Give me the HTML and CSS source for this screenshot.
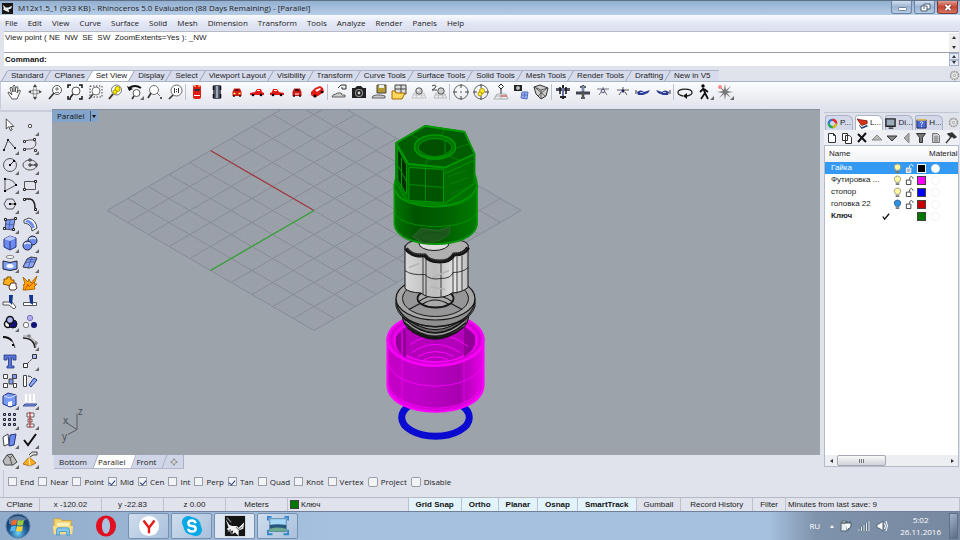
FILE: index.html
```html
<!DOCTYPE html>
<html lang="en">
<head>
<meta charset="utf-8">
<title>M12x1.5_1 - Rhinoceros 5.0 Evaluation</title>
<link rel="stylesheet" href="styles.css">
</head>
<body>
<header class="titlebar">
  <svg class="app-icon" viewBox="0 0 12 12"><rect width="12" height="12" fill="#151515"/><path d="M1 2l3 3 3 0 4-2-1 3-3 1 1 3-3-1-4-2 1-1z" fill="#eee"/></svg>
  <h1>M12x1.5_1 (933 KB) - Rhinoceros 5.0 Evaluation (88 Days Remaining) - [Parallel]</h1>
  <div class="window-buttons">
    <button aria-label="Minimize"><svg viewBox="0 0 20 11"><rect x="6.500" y="5.500" width="8" height="3" rx="1" fill="#fff" stroke="#5b6b80" stroke-width=".8"/></svg></button>
    <button aria-label="Restore"><svg viewBox="0 0 20 11"><path d="M9 2h6v5h-3v2H6V4h3z" fill="#fff" stroke="#4c5c70"/><path d="M9 4h3v3M8 6h2" fill="none" stroke="#4c5c70"/></svg></button>
    <button class="close" aria-label="Close"><svg viewBox="0 0 20 11"><path d="M7.500 3l5 5m0-5l-5 5" stroke="#6b2a25" stroke-width="3.400"/><path d="M7.500 3l5 5m0-5l-5 5" stroke="#fff" stroke-width="2"/></svg></button>
  </div>
</header>
<nav class="menubar">
  <button>File</button><button>Edit</button><button>View</button><button>Curve</button><button>Surface</button><button>Solid</button><button>Mesh</button><button>Dimension</button><button>Transform</button><button>Tools</button><button>Analyze</button><button>Render</button><button>Panels</button><button>Help</button>
</nav>
<section class="command">
  <div class="history"><p>View point ( NE&nbsp; NW&nbsp; SE&nbsp; SW&nbsp; ZoomExtents=Yes ): _NW</p>
    <div class="steppers"><button aria-label="Scroll up"><i class="up"></i></button><button aria-label="Scroll down"><i class="down"></i></button></div></div>
  <div class="prompt"><label for="cmd">Command:</label><input id="cmd" type="text">
    <div class="steppers boxed"><button aria-label="Previous"><i class="up"></i></button><button aria-label="Next"><i class="down"></i></button></div></div>
</section>
<nav class="tool-tabs">
  <button>Standard</button><button>CPlanes</button><button class="active">Set View</button><button>Display</button><button>Select</button><button>Viewport Layout</button><button>Visibility</button><button>Transform</button><button>Curve Tools</button><button>Surface Tools</button><button>Solid Tools</button><button>Mesh Tools</button><button>Render Tools</button><button>Drafting</button><button>New in V5</button>
  <button class="gear" aria-label="Options"><svg viewBox="0 0 12 12"><circle cx="6" cy="6" r="4.500" fill="none" stroke="#999" stroke-width="1.500" stroke-dasharray="2 .8"/><circle cx="6" cy="6" r="3.600" fill="#eee" stroke="#aaa" stroke-width=".7"/><circle cx="6" cy="6" r="1.300" fill="none" stroke="#999"/></svg></button>
</nav>
<div class="toolbar">
  <button aria-label="Pan"><svg viewBox="0 0 16 16"><path d="M5 15L1 9q0-2 2 0l2 2-2-7q1-2 2 0l1 4V2q1-2 2 0v6l1-5q2-1 2 1l-1 5 2-3q2 0 1 2l-3 7z" fill="#fff" stroke="#333" stroke-width=".8"/></svg></button>
  <button aria-label="Rotate view"><svg viewBox="0 0 16 16"><path d="M2 8q6-4 12 0-6 4-12 0M8 1q-4 7 0 14 4-7 0-14" fill="none" stroke="#777" stroke-width=".8"/><path d="M1 8l3-2v3zM15 8l-3-2v3zM8 0l2 3H6zM8 16l2-3H6z" fill="#444"/></svg></button>
  <button aria-label="Zoom dynamic"><svg viewBox="0 0 16 16"><circle cx="10" cy="6" r="4.500" fill="#fff" stroke="#444" stroke-width=".9"/><path d="M8 5h4M10 3v4M8 8.500h4" stroke="#555" stroke-width=".8"/><path d="M7 9l-5 6" stroke="#333" stroke-width="1.600"/></svg></button>
  <button aria-label="Zoom extents"><svg viewBox="0 0 16 16"><circle cx="9" cy="7" r="4" fill="#fff" stroke="#444" stroke-width=".9"/><path d="M6 10l-3 4" stroke="#222" stroke-width="1.600"/><path d="M1 4V1h3M12 1h3v3M15 12v3h-3M1 12v3h3" fill="none" stroke="#111" stroke-width="1.500"/></svg></button>
  <button aria-label="Zoom window"><svg viewBox="0 0 16 16"><path d="M3 2h12v11H3z" fill="none" stroke="#444" stroke-dasharray="1.500 1.500"/><circle cx="9" cy="7" r="4" fill="#fff" stroke="#666" stroke-width=".9"/><path d="M6 10l-4 5" stroke="#444" stroke-width="1.600"/></svg></button>
  <button aria-label="Zoom selected"><svg viewBox="0 0 16 16"><circle cx="9.500" cy="6" r="5" fill="#fff" stroke="#777"/><circle cx="10.500" cy="5" r="2.500" fill="#fe0" stroke="#a90"/><circle cx="8" cy="8" r="2" fill="#fe0" stroke="#a90"/><path d="M6 10l-4 5" stroke="#432" stroke-width="2"/></svg></button>
  <button class="more" aria-label="Undo view"><svg viewBox="0 0 16 16"><circle cx="9.500" cy="9" r="3.500" fill="#fff" stroke="#555"/><path d="M2 4q6-4 12 0" fill="none" stroke="#111" stroke-width="2"/><path d="M0 2l2 5 4-2z" fill="#111"/><path d="M7 12l-2 3" stroke="#333" stroke-width="1.600"/></svg></button>
  <button aria-label="Zoom target"><svg viewBox="0 0 16 16"><circle cx="7" cy="6" r="4.500" fill="#fff" stroke="#666" stroke-width=".9"/><path d="M4 9l-3 5" stroke="#333" stroke-width="1.600"/><path d="M10 9l3 3" stroke="#777"/><path d="M13 13h2v2h-2z" fill="#555"/></svg></button>
  <button aria-label="Zoom 1 to 1"><svg viewBox="0 0 16 16"><circle cx="9.500" cy="6.500" r="5.500" fill="#fff" stroke="#555" stroke-width=".9"/><path d="M7.500 4v5M11.500 4v5M9.500 5v1M9.500 7v1" stroke="#333"/><path d="M6 11l-4 4" stroke="#333" stroke-width="1.600"/></svg></button>
  <hr>
  <button aria-label="Top"><svg viewBox="0 0 16 16"><rect x="4" y="1" width="8" height="14" rx="2" fill="#e21a14"/><path d="M5 5h6l-1 2H6z" fill="#234"/><path d="M5 11h6v1H5z" fill="#fff"/><path d="M5 2h2M9 2h2" stroke="#ff9"/></svg></button>
  <button aria-label="Bottom"><svg viewBox="0 0 16 16"><rect x="4" y="1" width="8" height="14" rx="1" fill="#556"/><path d="M8 2v12" stroke="#9ab" stroke-width="2"/><path d="M4.500 2v4M11.500 2v4M4.500 10v4M11.500 10v4" stroke="#111" stroke-width="1.600"/></svg></button>
  <button aria-label="Front"><svg viewBox="0 0 16 16"><path d="M3.500 8L5 4.500h6L12.500 8v4h-9z" fill="#d81812"/><path d="M5.500 7l1-2h3l1 2z" fill="#611"/><path d="M4.500 9.500h2M9.500 9.500h2" stroke="#ff6" stroke-width="1.500"/><path d="M4 12h2M10 12h2" stroke="#111" stroke-width="1.500"/></svg></button>
  <button aria-label="Left"><svg viewBox="0 0 16 16"><path d="M1 9l5-1 2-3h4l1 3 2 1v2H1z" fill="#e21a14"/><path d="M8 6.500h3" stroke="#fff"/><circle cx="4" cy="11" r="1.300"/><circle cx="12" cy="11" r="1.300"/></svg></button>
  <button aria-label="Right"><svg viewBox="0 0 16 16"><path d="M15 9l-5-1-2-3H4L3 8 1 9v2h14z" fill="#e21a14"/><path d="M5 6.500h3" stroke="#fff"/><circle cx="4" cy="11" r="1.300"/><circle cx="12" cy="11" r="1.300"/></svg></button>
  <button aria-label="Back"><svg viewBox="0 0 16 16"><path d="M3.500 8L5 4.500h6L12.500 8v4h-9z" fill="#c91914"/><path d="M5.500 7l1-2h3l1 2z" fill="#311"/><path d="M6 10h4" stroke="#fff"/><path d="M4 12h2M10 12h2" stroke="#111" stroke-width="1.500"/></svg></button>
  <button aria-label="Perspective"><svg viewBox="0 0 16 16"><path d="M2 8l4-4 5-2 3 2 1 4-6 4-4 1-3-2z" fill="#e21a14"/><path d="M6 6l5-2 1 1-4 3z" fill="#fff"/><circle cx="6" cy="12" r="1.600"/><circle cx="13" cy="8" r="1.300"/></svg></button>
  <hr>
  <button aria-label="Named views"><svg viewBox="0 0 16 16"><path d="M1 13l1-2 3-1 1-1h4l1 2h3v2z" fill="#ccc" stroke="#444" stroke-width=".8"/><path d="M7 4l3-3h5v4h-4V3" fill="#eee" stroke="#333"/></svg></button>
  <button aria-label="Save view"><svg viewBox="0 0 16 16"><path d="M1 4h3l2-2h4l2 2h3v10H1z" fill="#222"/><circle cx="8" cy="9" r="4" fill="#999"/><circle cx="8" cy="9" r="3" fill="#222"/><circle cx="8" cy="9" r="1.400" fill="#ddd"/></svg></button>
  <button aria-label="Save position"><svg viewBox="0 0 16 16"><path d="M6 1h9v8H6z" fill="#b6992e" stroke="#444"/><path d="M8 1h5v3H8z" fill="#eee"/><path d="M1 14l1-2 3-1h5l4 1v2z" fill="#ccc" stroke="#444" stroke-width=".8"/></svg></button>
  <button aria-label="Open views"><svg viewBox="0 0 16 16"><path d="M4 1h11v9H4zM4 5h11M10 1v9" fill="#ddd" stroke="#444"/><path d="M1 15V7h3l1 2h9l-3 6z" fill="#ffd75c" stroke="#a76a00"/></svg></button>
  <button aria-label="Shaded"><svg viewBox="0 0 16 16"><path d="M3 9h10l2 5H1zM2 11h12M6 9l-1 5M10 9l1 5" fill="none" stroke="#c4c4c8"/><circle cx="8" cy="7" r="3.200" fill="#ccc" stroke="#555"/><circle cx="7" cy="6" r="1" fill="#fff"/></svg></button>
  <button aria-label="Two point perspective"><svg viewBox="0 0 16 16"><path d="M5 9h8l3 5H3zM4 11h11M8 9l-1 5M11 9l1 5" fill="none" stroke="#bbb"/><circle cx="10" cy="7" r="3.200" fill="#ccc" stroke="#555"/><path d="M1 2q2-2 4 0 0 2-4 4h5" fill="none" stroke="#444"/></svg></button>
  <hr>
  <button aria-label="Camera target"><svg viewBox="0 0 16 16"><circle cx="8" cy="8" r="7" fill="none" stroke="#555" stroke-width=".9"/><path d="M8 0v4M8 12v4M0 8h4M12 8h4" stroke="#444"/><circle cx="8" cy="8" r="1" fill="#888"/></svg></button>
  <button aria-label="Target selected"><svg viewBox="0 0 16 16"><circle cx="8" cy="8" r="7" fill="none" stroke="#555" stroke-width=".9"/><path d="M8 0v4M8 12v4M0 8h4M12 8h4" stroke="#444"/><circle cx="9" cy="7" r="2.500" fill="#fe3" stroke="#b99500"/><circle cx="7" cy="10" r="2" fill="#fe3" stroke="#b99500"/></svg></button>
  <button aria-label="Set CPlane view"><svg viewBox="0 0 16 16"><path d="M8 10V4" stroke="#222"/><path d="M8 0l2.500 2.500L8 5 5.500 2.500z" fill="#fff" stroke="#222"/><path d="M4 10h9l2 5H1zM8 10v5M3 12h11" fill="none" stroke="#aaa"/><path d="M8 12h6" stroke="#d44"/></svg></button>
  <button aria-label="Camera to plane"><svg viewBox="0 0 16 16"><path d="M1 1h8v6H1z" fill="#222"/><circle cx="5" cy="4" r="2" fill="#bbb"/><path d="M9 8h6l-1 7-6-1zM12 8l-1 6M9 11h6" fill="#9cb4f4" stroke="#5870c0"/></svg></button>
  <button aria-label="Named cube"><svg viewBox="0 0 16 16"><path d="M1 3l6-2 8 3-2 8-5 3-5-5z" fill="#ccc" stroke="#333"/><path d="M1 3l7 3 7-2M8 6v9M3 4l9 8M14 4l-9 8" fill="none" stroke="#444" stroke-width=".8"/></svg></button>
  <hr>
  <button aria-label="Plane top"><svg viewBox="0 0 16 16"><path d="M1 4h14v3H1z" fill="#556"/><path d="M8 1v14M5 13h6" stroke="#222" stroke-width="2"/><path d="M8 4v8" stroke="#7b8fd0" stroke-width="1.500"/><path d="M5 3v7M11 3v7" stroke="#111" stroke-width="1.500"/></svg></button>
  <button aria-label="Plane bottom"><svg viewBox="0 0 16 16"><path d="M1 9h14" stroke="#445" stroke-width="3"/><path d="M5 3h6M6 14h4" stroke="#333" stroke-width="1.500"/><path d="M8 1v13" stroke="#555" stroke-width="2.500"/><path d="M8 2v5" stroke="#8a9cdc" stroke-width="1.500"/></svg></button>
  <button aria-label="Plane front"><svg viewBox="0 0 16 16"><path d="M2 5h12M8 3v5M6 8l-2 3M10 8l2 3" stroke="#555" stroke-width=".8"/><circle cx="8" cy="7" r="1.800" fill="#dde" stroke="#336" stroke-width=".8"/></svg></button>
  <button aria-label="Plane back"><svg viewBox="0 0 16 16"><path d="M2 6h12M8 3v5M6 8l-2 3M10 8l2 3" stroke="#333" stroke-width=".8"/><circle cx="8" cy="7" r="1.600" fill="#226"/></svg></button>
  <button aria-label="Plane left"><svg viewBox="0 0 16 16"><path d="M2 8q4-3 7 0l6-2-2 3-5 2H3z" fill="#2b3b91"/><path d="M5 8.500h3" stroke="#b8c4f0"/><path d="M1 6v4" stroke="#333"/></svg></button>
  <button aria-label="Plane right"><svg viewBox="0 0 16 16"><path d="M14 8q-4-3-7 0L1 6l2 3 5 2h5z" fill="#2b3b91"/><path d="M8 8.500h3" stroke="#b8c4f0"/><path d="M15 6v4" stroke="#333"/></svg></button>
  <hr>
  <button aria-label="Turntable"><svg viewBox="0 0 16 16"><path d="M6 12Q1 11 1 8.500C1 4 15 4 15 8.500Q15 11 10 12" fill="none" stroke="#222" stroke-width="1.300"/><path d="M10 9v6l-4-3z" fill="#111"/></svg></button>
  <button class="more" aria-label="Walkabout"><svg viewBox="0 0 16 16"><circle cx="6" cy="2" r="1.700"/><path d="M6 4l2 5-4 6M8 9l3 6M7 5l4 3M6 5L3 8" fill="none" stroke="#111" stroke-width="1.800"/></svg></button>
  <button class="more" aria-label="Compass"><svg viewBox="0 0 16 16"><path d="M8 0l1 6 5-4-4 5 6 1-6 1 4 5-5-4-1 6-1-6-5 4 4-5-6-1 6-1-4-5 5 4z" fill="#777"/><circle cx="3" cy="3" r="2" fill="#f88"/></svg></button>
</div>
<main class="workspace">
  <aside class="toolbox">
    <button aria-label="Select"><svg viewBox="0 0 16 16"><path d="M5 1v12l3-3 2 5 2-1-2-4h4z" transform="scale(.85)" fill="#fff" stroke="#333"/></svg></button>
    <button class="more" aria-label="Point"><svg viewBox="0 0 16 16"><circle cx="8" cy="8" r="1.700" fill="#fff" stroke="#444"/></svg></button>
    <button class="more" aria-label="Polyline"><svg viewBox="0 0 16 16"><path d="M2 13L6 3l7 8" fill="none" stroke="#444"/><path d="M1 12h2v2H1zM5 2h2v2H5zM12 10h2v2h-2z" fill="#222"/></svg></button>
    <button class="more" aria-label="Curve"><svg viewBox="0 0 16 16"><path d="M3 4q10-3 11 2 0 7-11 6" fill="none" stroke="#555"/><path d="M1.500 3.500h2v2h-2zM11.500 1.500h2v2h-2zM1.500 11.500h2v2h-2zM12.500 12.500h2v2h-2z" fill="#fff" stroke="#333"/></svg></button>
    <button class="more" aria-label="Circle"><svg viewBox="0 0 16 16"><circle cx="8" cy="8" r="6.500" fill="none" stroke="#555"/><path d="M8 8l4-4" stroke="#222"/><path d="M7 7h2v2H7zM11 3h2v2h-2z"/></svg></button>
    <button class="more" aria-label="Ellipse"><svg viewBox="0 0 16 16"><ellipse cx="8" cy="8" rx="7" ry="5" fill="none" stroke="#555"/><path d="M8 8h6" stroke="#333"/><path d="M7 7h2v2H7zM7 2h2v2H7zM13 7h2v2h-2z" fill="#fff" stroke="#222"/></svg></button>
    <button class="more" aria-label="Arc"><svg viewBox="0 0 16 16"><path d="M3 14V2q8 0 11 6L3 14" fill="none" stroke="#444" stroke-width=".9"/><path d="M2 1h2v2H2zM2 13h2v2H2zM13 7h2v2h-2z"/></svg></button>
    <button class="more" aria-label="Rectangle"><svg viewBox="0 0 16 16"><path d="M2.500 4.500h11v8h-11z" fill="none" stroke="#555"/><path d="M1.500 11.500h2v2h-2zM12.500 3.500h2v2h-2z" fill="#fff" stroke="#222"/></svg></button>
    <button class="more" aria-label="Polygon"><svg viewBox="0 0 16 16"><path d="M5 3h6l3 5-3 5H5L2 8z" fill="none" stroke="#444" stroke-width=".9"/><path d="M8 8h5" stroke="#333"/><path d="M7 7h2v2H7zM12 7h2v2h-2z"/></svg></button>
    <button class="more" aria-label="Fillet"><svg viewBox="0 0 16 16"><path d="M3 3h5q5 1 5 9" fill="none" stroke="#222" stroke-width="1.600"/><path d="M1.500 2.500h2v2h-2zM12.500 12.500h2v2h-2z" fill="#fff" stroke="#222"/></svg></button>
    <button class="more" aria-label="Surface from points"><svg viewBox="0 0 16 16"><path d="M4 4l9-1-2 11-8-1z" fill="#7f9bf0" stroke="#445"/><path d="M8 4L7 13M4 8l8 1" stroke="#3f55b0" stroke-width=".8"/><path d="M2.500 2.500h2v2h-2zM12.500 1.500h2v2h-2zM10.500 12.500h2v2h-2zM1.500 11.500h2v2h-2z" fill="#fff" stroke="#222"/></svg></button>
    <button class="more" aria-label="Sweep"><svg viewBox="0 0 16 16"><path d="M2 4l5-2q7 2 8 10l-5 3q0-7-8-8z" fill="#fff" stroke="#333" stroke-width=".9"/><path d="M5 3.500q6 1 8 8l-3 1Q9 7 3 6z" fill="#6f8fee"/></svg></button>
    <button class="more" aria-label="Box"><svg viewBox="0 0 16 16"><path d="M2 4l6-3 6 2v9l-6 3-6-3z" fill="#6c8af0" stroke="#26357d"/><path d="M2 4l6 2 6-3-6-2z" fill="#b8c8ff"/><path d="M8 6v9" stroke="#26357d"/></svg></button>
    <button class="more" aria-label="Boolean"><svg viewBox="0 0 16 16"><circle cx="10.500" cy="5.500" r="4.500" fill="#6c8af0" stroke="#223"/><circle cx="5.500" cy="10.500" r="4.500" fill="#6c8af0" stroke="#223"/><path d="M7 4q4-2 7 0M2 9q4-2 7 0" stroke="#dce5ff" fill="none" stroke-width="1.500"/></svg></button>
    <button class="more" aria-label="Patch"><svg viewBox="0 0 16 16"><ellipse cx="8" cy="2" rx="4" ry="1.500" fill="#fff" stroke="#666" stroke-width=".8"/><path d="M1 6q7 3 14 0v8q-7 3-14 0z" fill="#7fa2f4" stroke="#223"/><ellipse cx="8" cy="11" rx="3.500" ry="2" fill="#fff"/></svg></button>
    <button class="more" aria-label="Mesh"><svg viewBox="0 0 16 16"><path d="M5 4l4-2 6 1-4 9-4 1-6-1z" fill="#8da8f4" stroke="#334"/><path d="M3 8q5-2 10-1M10 2L6 13M5 5q5-1 9 0" fill="none" stroke="#3c4f9d" stroke-width=".8"/></svg></button>
    <button aria-label="Join"><svg viewBox="0 0 16 16"><path d="M2 4l3 0 0-2 4 0v3l3 0v4H9l-1 2-3-1-4-1 1-2z" fill="#ffb21c" stroke="#844e00"/><path d="M9 8h5v3l1 2-2 2H8l-1-3z" fill="#fff" stroke="#533"/></svg></button>
    <button aria-label="Explode"><svg viewBox="0 0 16 16"><path d="M1 2l5 5 1-3 2 4 6-7-3 8h3l-3 3 1 2-9 1-3 0 1-4-1-1 2-1z" fill="#ffa40e" stroke="#b06a00"/><path d="M3 15l3-6 1 3 5-5" fill="none" stroke="#d45b00"/></svg></button>
    <button aria-label="Trim"><svg viewBox="0 0 16 16"><path d="M1 8h9l4 5-2 2-5-4H1z" fill="#fff" stroke="#444" stroke-width=".9"/><path d="M7 1h4l-1 10-3-3z" fill="#16358e"/></svg></button>
    <button aria-label="Split"><svg viewBox="0 0 16 16"><path d="M1.500 8.500h13v3h-13z" fill="#fff" stroke="#444" stroke-width=".9"/><path d="M7 1h4v10l-3-2z" fill="#16358e"/></svg></button>
    <button class="more" aria-label="Group"><svg viewBox="0 0 16 16"><circle cx="6" cy="10" r="3.500" fill="#fff" stroke="#111" stroke-width="1.500"/><circle cx="11" cy="10" r="4" fill="#117" stroke="#111"/><circle cx="8" cy="6" r="3.500" fill="#aab4f2" stroke="#111" stroke-width="1.500"/></svg></button>
    <button aria-label="Ungroup"><svg viewBox="0 0 16 16"><circle cx="8" cy="4" r="2.700" fill="#b3aef4" stroke="#66a" stroke-width=".8"/><circle cx="4" cy="11" r="2.700" fill="#fff" stroke="#555" stroke-width=".8"/><circle cx="12" cy="11" r="3" fill="#117"/></svg></button>
    <button aria-label="Extend"><svg viewBox="0 0 16 16"><path d="M1 3q10 0 12 11" fill="none" stroke="#444"/><path d="M1 3q6 0 9 4" fill="none" stroke="#111" stroke-width="1.800"/><path d="M10 10h2v2h-2z"/></svg></button>
    <button class="more" aria-label="Edit points"><svg viewBox="0 0 16 16"><path d="M1 4q11 0 12 10" fill="none" stroke="#222" stroke-width="1.500"/><path d="M1 2h6l7 6v5" fill="none" stroke="#888" stroke-width=".8"/><path d="M6 1h2v2H6zM13 8h2v2h-2z" fill="#fff" stroke="#444" stroke-width=".8"/></svg></button>
    <button aria-label="Text"><svg viewBox="0 0 16 16"><path d="M2 2h12v5h-3V5H9.500v8H12v2H5v-2h1.500V5H5v2H2z" fill="#5676d8" stroke="#26357d" stroke-width=".8"/></svg></button>
    <button class="more" aria-label="Move"><svg viewBox="0 0 16 16"><path d="M1.500 10.500h4v4h-4z" fill="#fff" stroke="#333"/><path d="M10.500 1.500h4v4h-4z" fill="#aabcf8" stroke="#333"/><path d="M6 10l4-4" stroke="#333" stroke-dasharray="2 1"/></svg></button>
    <button aria-label="Copy"><svg viewBox="0 0 16 16"><path d="M1.500 1.500h4v4h-4zM1.500 10.500h4v4h-4zM11.500 10.500h3v4h-3z" fill="#fff" stroke="#333" stroke-width=".9"/><path d="M7 6h4v5H7zM10.500 1.500h4v4h-4z" fill="#7f9bf0" stroke="#333" stroke-width=".9"/></svg></button>
    <button aria-label="Rotate"><svg viewBox="0 0 16 16"><path d="M1.500 2.500h3v11h-3z" fill="#fff" stroke="#444"/><path d="M7 12l5-7 3 2-6 7z" fill="#8ba8f6" stroke="#26357d"/><path d="M6 3q3 0 4 2" fill="none" stroke="#333"/></svg></button>
    <button class="more" aria-label="Solid edit"><svg viewBox="0 0 16 16"><path d="M1 4l5-3 8 2v10l-6 2-7-3z" fill="#789af5" stroke="#26357d"/><path d="M2 4l6 2 6-3" fill="none" stroke="#d7e1ff"/><path d="M6 10l4-1v5l-4 0z" fill="#fff"/></svg></button>
    <button class="more" aria-label="Project"><svg viewBox="0 0 16 16"><path d="M3 12h12l-2 2H1z" fill="#7f9bf0" stroke="#26357d" stroke-width=".8"/><path d="M4 2v8M8 2v8M12 2v8" stroke="#fff" stroke-width="2"/><path d="M2 9h4l-2 2zM6 9h4l-2 2zM10 9h4l-2 2z" fill="#fff"/></svg></button>
    <button class="more" aria-label="Array"><svg viewBox="0 0 16 16"><path d="M1.500 1.500h2v2h-2zM6.500 1.500h2v2h-2zM11.500 1.500h2v2h-2zM1.500 6.500h2v2h-2zM6.500 6.500h2v2h-2zM11.500 6.500h2v2h-2zM1.500 11.500h2v2h-2zM6.500 11.500h2v2h-2zM11.500 11.500h2v2h-2z" fill="#aab8e8" stroke="#223"/></svg></button>
    <button class="more" aria-label="Align"><svg viewBox="0 0 16 16"><path d="M5 1h7v4H5zM6 7h4v3H6zM5 12h7v3H5z" fill="#eee" stroke="#555" stroke-width=".9"/><path d="M8 0v16" stroke="#d33" stroke-width="1.300"/></svg></button>
    <button class="more" aria-label="Transform"><svg viewBox="0 0 16 16"><path d="M1 5l5-3 1 10-5 2z" fill="#fff" stroke="#444"/><path d="M8 3l6-1-2 11-5 1z" fill="#6c8af0" stroke="#26357d"/></svg></button>
    <button class="more" aria-label="Check"><svg viewBox="0 0 16 16"><path d="M2 8l4 5L14 2" fill="none" stroke="#111" stroke-width="2"/></svg></button>
    <button class="more" aria-label="Render mesh"><svg viewBox="0 0 16 16"><path d="M1 10l4-6 5-1 5 8-4 3-8 0z" fill="#bbb" stroke="#444"/><path d="M5 4l3 3 2 7M8 7l3-3" fill="none" stroke="#555"/></svg></button>
    <button class="more" aria-label="Dimension"><svg viewBox="0 0 16 16"><path d="M1 13l6-7 7 6-6 3z" fill="#ffac20" stroke="#a25d00" stroke-width=".8"/><path d="M7 6l1 9" stroke="#fff3c4"/><path d="M7 4l3-3h5v3h-4l-3 2" fill="#ddd" stroke="#333" stroke-width=".9"/></svg></button>
  </aside>
  <section class="canvas-column">
    <div class="viewport">
      <div class="view-title"><span>Parallel</span><button aria-label="Viewport menu"></button></div>
      <svg class="scene" viewBox="52 109 768 346" preserveAspectRatio="xMidYMid slice">
        <defs>
          <linearGradient id="green"><stop stop-color="#007600"/><stop offset=".25" stop-color="#005400"/><stop offset=".6" stop-color="#006000"/><stop offset="1" stop-color="#007a00"/></linearGradient>
          <linearGradient id="magenta"><stop stop-color="#c400c4"/><stop offset=".3" stop-color="#c000c8"/><stop offset=".75" stop-color="#a800b0"/><stop offset="1" stop-color="#e800e8"/></linearGradient>
          <linearGradient id="steel"><stop stop-color="#d8d8d8"/><stop offset=".3" stop-color="#c4c4c4"/><stop offset=".5" stop-color="#bdbdbd"/><stop offset=".8" stop-color="#e4e4e4"/><stop offset="1" stop-color="#bbb"/></linearGradient>
        </defs>
        <g transform="matrix(20.700 -12 20.700 12 107 210)">
          <path class="grid-minor" d="M0 5H10M5 0V10"/>
          <path class="grid-major" d="M0 0V10M1 0V10M2 0V10M3 0V10M4 0V10M5 0V10M6 0V10M7 0V10M8 0V10M9 0V10M10 0V10M0 0H10M0 1H10M0 2H10M0 3H10M0 4H10M0 5H10M0 6H10M0 7H10M0 8H10M0 9H10M0 10H10"/>
        </g>
        <path d="M210.500 150L314 210" stroke="#a13a3f" stroke-width="1.300"/>
        <path d="M314 210L210.500 270" stroke="#35a035" stroke-width="1.300"/>
        <g class="axes"><path d="M77 429V413M77 429L66 422M77 429L68 434"/><text x="78" y="414">z</text><text x="63" y="423">x</text><text x="62" y="439">y</text></g>
        <ellipse cx="435.500" cy="417" rx="33.800" ry="18.800" fill="none" stroke="#0a0ad0" stroke-width="7"/>
        <g fill="none" stroke="#f0f">
          <path d="M387.500 338V385C389 420 482 420 483.500 385V338z" fill="url(#magenta)" stroke-width="2"/>
          <ellipse cx="435.500" cy="339" rx="48" ry="26.500" fill="#e000e0" stroke-width="2"/>
          <ellipse cx="435.500" cy="339" rx="44.500" ry="23.500" stroke="#b000b8" stroke-width=".7"/>
          <ellipse cx="435.500" cy="340" rx="41" ry="21.500" fill="#b400bb" stroke-width="1.500"/>
          <path d="M396 336V345C399 352 402 355 406 357V328zM464 326V356C471 352 474 348 475 343V335z" fill="#900096" stroke="none"/>
          <path d="M402 330V356M412 352Q435 336 460 352M418 356Q435 346 454 356M424 359Q435 354 448 359M410 344Q440 324 468 346"/>
          <path d="M387.500 360C392 394 479 394 483.500 360" stroke-width=".8"/>
          <path d="M402 359V399M464 359V401" stroke-width=".6"/>
          <path d="M388 380C393 416 478 416 483 380V388C477 417 394 417 388 388z" fill="#f0f" stroke="none" opacity=".7"/>
          <path d="M389 386C397 416 474 416 482 386" stroke="#c800c8" stroke-width=".8"/>
        </g>
        <g stroke="#161616" fill="none">
          <path d="M402 308Q401 325 411 329Q435 345 460 329Q470 325 469 308z" fill="#666"/>
          <path d="M402 314Q435 344 468 314M403 317Q435 348 467 317M404 322Q435 350 466 322M407 327Q435 350 463 327M412 331Q435 344 458 331" stroke-width="1.600"/>
          <path d="M405 315Q435 341 466 315M406 321Q435 347 465 321" stroke="#bbb" stroke-width=".8"/>
          <path d="M396 298V306Q400 318 411 321Q435 332 460 321Q472 316 475 306V298z" fill="#8f8f8f"/>
          <path d="M396 302Q402 325 435 326Q469 325 475 302" stroke-width="1.200"/>
          <ellipse cx="435.500" cy="298" rx="39.500" ry="21.500" fill="#a6a6a6" stroke-width="1.200"/>
          <ellipse cx="435.500" cy="298" rx="33" ry="18" fill="#969698"/>
          <ellipse cx="435.500" cy="298" rx="18" ry="9" fill="#aaa" stroke-width="1.800"/>
          <path d="M419 301Q435 289 452 301M422 304Q435 295 449 304M409 309L420 303M462 309L451 303" stroke-width="1.200"/>
          <path d="M405 245V288Q409 292 421 292.500Q426 297 436 297Q446 297 452 292.500Q462 292 468 287V245z" fill="url(#steel)"/>
          <path d="M405 248Q405 242 415 240L424 241Q435 235 448 241L461 240Q470 242 468 249Q465 254 454 254Q452 261 440 262Q427 262 425 255Q409 256 405 248z" fill="#b0b0b0" stroke="#222" stroke-width="1.200"/>
          <path d="M406 248Q411 256 425 255Q429 261 440 261Q450 261 454 254Q465 254 468 247" stroke-width="4"/>
          <path d="M407 248Q412 255 426 254Q430 260 440 260Q449 260 452 253Q464 253 467 248" stroke="#777" stroke-width=".6" stroke-dasharray="1 1"/>
          <ellipse cx="434" cy="243" rx="15" ry="7" fill="#ddd"/>
          <path d="M405 270Q411 275 425 274Q430 280 441 278Q451 278 453 272Q463 272 468 267M423 257V294M426 258V295M441 263V297M453 256V294M457 256V293M462 255V290" stroke-width=".8"/>
          <path d="M409 267L419 263M432 277L449 270M430 286L445 289" stroke="#b4b4b4" stroke-width="1.500"/>
        </g>
        <g fill="none" stroke="#009a00" stroke-linejoin="round">
          <path d="M394.500 184V224C397 250 474 250 477 224V184z" fill="url(#green)" stroke="#089408" stroke-width="1.800"/>
          <path d="M412 236L421 228L439 230L450 226L449 234L439 240L424 243z" fill="#1d571b" stroke="#306f2f" stroke-width=".7"/>
          <ellipse cx="434" cy="237" rx="14" ry="5" stroke="#155015"/>
          <path d="M394.500 184Q395 177 398 174L474 172Q477 179 477 184C473 212 399 213 394.500 188z" fill="#007000" stroke-width="1.500"/>
          <path d="M396 142.500V182L408.500 202L443.500 204L474.500 183V153.500L464.500 131.500L425 125.500z" fill="#006c00" stroke="#008a00" stroke-width="1.800"/>
          <path d="M397.500 147L406.500 164V194L398 180zM401.500 157V188M398 165L407 182" fill="#003000"/>
          <path d="M409 167L443.500 169V202L409 200z" fill="#005400"/>
          <path d="M425.500 167V202M409 184L443.500 187M474 160L445 173" stroke-width=".8"/>
          <path d="M396 142.500L425 125.500L464.500 131.500L474.500 153.500L445 167L408.500 163.500z" fill="#005c00" stroke-width="1.800"/>
          <path d="M410 134L420 139M445 128L441 135M470 143L455 148M460 160L446 154M425 166L428 156" stroke-width=".6"/>
          <ellipse cx="435" cy="146.500" rx="20.500" ry="12" fill="#007200" stroke-width="1.500"/>
          <ellipse cx="435" cy="147.500" rx="17" ry="9.500" fill="#005000"/>
          <path d="M418 149Q435 164 452 149M445 140V155" stroke-width=".8"/>
          <path d="M448 176L466 170M449 184L468 177M450 194L466 187" stroke="#198319" stroke-width=".6"/>
          <path d="M394.500 211C398 231 473 231 477 211M396 190C402 212 470 212 475 190" stroke-width=".8"/>
        </g>
      </svg>
    </div>
    <nav class="view-tabs"><button>Bottom</button><button class="active">Parallel</button><button>Front</button><button class="add" aria-label="Add view"><svg viewBox="0 0 8 8"><path d="M4 0l1.500 2.500L8 4 5.500 5.500 4 8 2.500 5.500 0 4l2.500-1.500z" fill="#888"/><path d="M4 2v4M2 4h4" stroke="#eee"/></svg></button></nav>
  </section>
  <aside class="panel">
    <nav class="panel-tabs">
      <button><svg viewBox="0 0 12 12"><circle cx="6" cy="6" r="4" fill="none" stroke="#2d77d2" stroke-width="2.500"/><path d="M6 2a4 4 0 0 1 4 4" fill="none" stroke="#f22" stroke-width="2.500"/><path d="M10 6a4 4 0 0 1-4 4" fill="none" stroke="#e4c100" stroke-width="2.500"/><path d="M6 10a4 4 0 0 1-4-4" fill="none" stroke="#2a5" stroke-width="2.500"/></svg>P...</button>
      <button class="active"><svg viewBox="0 0 12 12"><path d="M2 8l3 4 7-3-3-3z" fill="#247"/><path d="M1 6l4 4 7-3-3-3z" fill="#eed"/><path d="M0 1l4 1 7 1v3L5 8z" fill="#d63412" stroke="#822"/></svg>L...</button>
      <button><svg viewBox="0 0 12 12"><path d="M1 1h10v8H1zM4 11h5" fill="#9ab" stroke="#222" stroke-width="1.500"/></svg>Di...</button>
      <button><svg viewBox="0 0 12 12"><path d="M1 2h10v9H1z" fill="#4a68d8" stroke="#225"/><path d="M1 2h10" stroke="#dcb85c" stroke-width="2"/><path d="M4.500 5q2-2 3 0 0 1-1.500 2v1m0 1v1" stroke="#fff" fill="none"/></svg>H...</button>
      <button class="gear" aria-label="Panel options"><svg viewBox="0 0 12 12"><circle cx="6" cy="6" r="4.500" fill="none" stroke="#999" stroke-width="1.500" stroke-dasharray="2 .8"/><circle cx="6" cy="6" r="3.600" fill="#eee" stroke="#aaa" stroke-width=".7"/><circle cx="6" cy="6" r="1.300" fill="none" stroke="#999"/></svg></button>
    </nav>
    <div class="panel-tools">
      <button aria-label="New layer"><svg viewBox="0 0 12 12"><path d="M2.500 1.500h5l2 2v7h-7zM7.500 1.500v2h2" fill="#fff" stroke="#333"/></svg></button>
      <button aria-label="New sublayer"><svg viewBox="0 0 12 12"><path d="M1.500 1.500h5v7h-5zM4.500 3.500h4l2 2v6h-6z" fill="#fff" stroke="#333"/></svg></button>
      <button aria-label="Delete"><svg viewBox="0 0 12 12"><path d="M2 2l8 8M10 1L2 10" stroke="#111" stroke-width="2"/></svg></button>
      <button aria-label="Move up"><svg viewBox="0 0 12 12"><path d="M1 8l5-5 5 5z" fill="#bbb" stroke="#888"/></svg></button>
      <button aria-label="Move down"><svg viewBox="0 0 12 12"><path d="M1 4h10L6 9z" fill="#888" stroke="#333"/></svg></button>
      <button aria-label="Move out"><svg viewBox="0 0 12 12"><path d="M9 1v10L4 6z" fill="#aaa" stroke="#888"/></svg></button>
      <button aria-label="Filter"><svg viewBox="0 0 12 12"><path d="M1.500 1.500h9l-3 4v5h-3v-5z" fill="#777" stroke="#333"/></svg></button>
      <button aria-label="Sheet"><svg viewBox="0 0 12 12"><path d="M2.500 1.500h5l2 2v7h-7z" fill="#ccc" stroke="#777"/><path d="M4 5h4M4 7h4M4 9h4" stroke="#777"/></svg></button>
      <button aria-label="Tools"><svg viewBox="0 0 12 12"><path d="M3 2l4-1 4 4-2 1-2-2-1 1zM6 5l-5 6" fill="#333" stroke="#333" stroke-width="1.300"/></svg></button>
    </div>
    <div class="layers">
      <table>
        <colgroup><col class="c-name"><col class="c-icon"><col class="c-icon"><col class="c-icon"><col class="c-icon"><col></colgroup>
        <thead><tr><th colspan="5">Name</th><th>Material</th></tr></thead>
        <tbody>
          <tr class="selected"><td>Гайка</td><td></td><td><svg viewBox="0 0 10 12"><path d="M3 8Q-1 2 5 1q6 1 2 7z" fill="#fff9a0" stroke="#998"/><path d="M3 9h4v2H3z" fill="#777"/></svg></td><td><svg viewBox="0 0 10 12"><path d="M5 5V3q2-3 4 0v1" fill="none" stroke="#fff"/><path d="M1.500 5.500h5v5h-5z" fill="#bbb" stroke="#fff"/></svg></td><td><i class="swatch black"></i></td><td><i class="material white"></i></td></tr>
          <tr><td>Футировка ...</td><td></td><td><svg viewBox="0 0 10 12"><path d="M3 8Q-1 2 5 1q6 1 2 7z" fill="#fff9a0" stroke="#998"/><path d="M3 9h4v2H3z" fill="#777"/></svg></td><td><svg viewBox="0 0 10 12"><path d="M5 5V3q2-3 4 0v1" fill="none" stroke="#444"/><path d="M1.500 5.500h5v5h-5z" fill="#fff" stroke="#333"/></svg></td><td><i class="swatch pink"></i></td><td><i class="material"></i></td></tr>
          <tr><td>стопор</td><td></td><td><svg viewBox="0 0 10 12"><path d="M3 8Q-1 2 5 1q6 1 2 7z" fill="#fff9a0" stroke="#998"/><path d="M3 9h4v2H3z" fill="#777"/></svg></td><td><svg viewBox="0 0 10 12"><path d="M5 5V3q2-3 4 0v1" fill="none" stroke="#444"/><path d="M1.500 5.500h5v5h-5z" fill="#fff" stroke="#333"/></svg></td><td><i class="swatch blue"></i></td><td><i class="material"></i></td></tr>
          <tr><td>головка 22</td><td></td><td><svg viewBox="0 0 10 12"><path d="M3 8Q-1 2 5 1q6 1 2 7z" fill="#2c8fe8" stroke="#368"/><path d="M3 9h4v2H3z" fill="#777"/></svg></td><td><svg viewBox="0 0 10 12"><path d="M5 5V3q2-3 4 0v1" fill="none" stroke="#444"/><path d="M1.500 5.500h5v5h-5z" fill="#fff" stroke="#333"/></svg></td><td><i class="swatch red"></i></td><td><i class="material"></i></td></tr>
          <tr class="current"><td>Ключ</td><td><svg viewBox="0 0 10 12"><path d="M2 6l2 3 5-6" fill="none" stroke="#111" stroke-width="1.500"/></svg></td><td></td><td></td><td><i class="swatch green"></i></td><td><i class="material"></i></td></tr>
        </tbody>
      </table>
      <div class="hscroll"><button aria-label="Scroll left"><i class="left"></i></button><span class="thumb"></span><button aria-label="Scroll right"><i class="right"></i></button></div>
    </div>
  </aside>
</main>
<form class="osnap">
  <label><input type="checkbox">End</label><label><input type="checkbox">Near</label><label><input type="checkbox">Point</label><label><input type="checkbox" checked>Mid</label><label><input type="checkbox" checked>Cen</label><label><input type="checkbox">Int</label><label><input type="checkbox">Perp</label><label><input type="checkbox" checked>Tan</label><label><input type="checkbox">Quad</label><label><input type="checkbox">Knot</label><label><input type="checkbox">Vertex</label><label class="large"><input type="checkbox">Project</label><label class="large"><input type="checkbox">Disable</label>
</form>
<footer class="status">
  <button class="cplane">CPlane</button><span class="coord">x -120.02</span><span class="coord">y -22.83</span><span class="coord">z 0.00</span><span class="coord">Meters</span><button class="layer"><i class="swatch green"></i>Ключ</button>
  <button class="on">Grid Snap</button><button class="on">Ortho</button><button class="on">Planar</button><button class="on">Osnap</button><button class="on">SmartTrack</button><button>Gumball</button><button class="record">Record History</button><button>Filter</button><span class="save">Minutes from last save: 9</span>
</footer>
<footer class="taskbar">
  <button class="start" aria-label="Start"><svg viewBox="0 0 26 26"><defs><radialGradient id="orb" cy=".8"><stop stop-color="#6fd4f6"/><stop offset=".6" stop-color="#2869a4"/><stop offset="1" stop-color="#174475"/></radialGradient></defs><circle cx="13" cy="13" r="12" fill="url(#orb)" stroke="#5a7fa5"/><path d="M4 6q9-6 18 0-9 6-18 5z" fill="#fff" opacity=".3"/><path d="M7 8q3-2 5-1l-1 5q-3-1-5 1z" fill="#f2672a"/><path d="M13 7q3 1 6 0l-1 5q-3 1-6 0z" fill="#95cc3b"/><path d="M6 14q3-2 5-1l-1 5q-3-1-5 1z" fill="#54b7ef"/><path d="M12 13q3 1 6 0l-1 5q-3 1-6 0z" fill="#ffd12e"/></svg></button>
  <button aria-label="Explorer"><svg viewBox="0 0 24 24"><path d="M2 4h7l2 2h10v14H2z" fill="#f0cf6e" stroke="#c6a04a"/><path d="M4 6h6M5 8h14v6H5z" fill="#fbf1b5" stroke="#edd980"/><path d="M1 12h22l-1 9H2z" fill="#f7dc87"/><path d="M5 22v-6q0-2 2-2h10q2 0 2 2v6h-3v-4H8v4z" fill="#84c7ee" stroke="#4d99cd"/></svg></button>
  <button aria-label="Opera"><svg viewBox="0 0 24 24"><ellipse cx="12" cy="12" rx="11" ry="11.500" fill="#e01020"/><ellipse cx="12" cy="12" rx="4.500" ry="8.500" fill="#a9c2df"/></svg></button>
  <button class="running" aria-label="Yandex Browser"><svg viewBox="0 0 24 24"><circle cx="12" cy="12" r="11" fill="#fff"/><path d="M6 6l6 8 6-8M12 13v7" fill="none" stroke="#e21b1b" stroke-width="2.600"/></svg></button>
  <button class="running" aria-label="Skype"><svg viewBox="0 0 24 24"><circle cx="8" cy="8" r="7" fill="#08a8e6"/><circle cx="16" cy="16" r="7" fill="#08a8e6"/><circle cx="12" cy="12" r="9.500" fill="#08a8e6"/><path d="M16 9q-1-3-4-3-4 0-4 3t4 3 4 3-4 3q-4 0-4-3" fill="none" stroke="#fff" stroke-width="2.600"/></svg></button>
  <button class="running focused" aria-label="Rhinoceros"><svg viewBox="0 0 24 24"><rect x="1" y="1" width="22" height="22" fill="#151515"/><path d="M2 5l4 6 3 1 5 0 2 2 6-6-1 7-5 2 0 6-4-4-3 2 1-4-4 1-3-3 2-1z" fill="#f2f2f2"/><path d="M4 18l3-2 1 5M13 13l3 3 4-3M3 3l5 5" fill="none" stroke="#888" stroke-width="1.200"/></svg></button>
  <button class="running" aria-label="Pictures"><svg viewBox="0 0 24 24"><path d="M3 4h18v14H3z" fill="#a4d8f5" stroke="#5c86b2"/><path d="M3 11q8-2 18 0v7H3z" fill="#28577d"/><path d="M3 15q8-3 18 0v3H3z" fill="#6cab90"/><path d="M1 6V2h4M19 2h4v4M1 16v5h5M18 21h5v-5" fill="none" stroke="#3286cc" stroke-width="2"/></svg></button>
  <div class="tray">
    <span class="lang">RU</span>
    <button aria-label="Show hidden icons"><i class="up light"></i></button>
    <svg viewBox="0 0 12 12"><path d="M1 3h6v8H1zM2 1h4v2H2z" fill="#e8edf3" stroke="#566"/><path d="M5 3h6v3q-1 3-3 3v2M7 1v2M10 1v2" fill="#fff" stroke="#456"/></svg>
    <svg viewBox="0 0 12 12"><path d="M1 11V9M3.500 11V7M6 11V5M8.500 11V3M11 11V1" stroke="#46586f" stroke-width="2.400"/><path d="M1 11V9M3.500 11V7M6 11V5M8.500 11V3M11 11V1" stroke="#e6edf5" stroke-width="1.200"/></svg>
    <svg viewBox="0 0 12 12"><path d="M1 4h2l4-3v10L3 8H1z" fill="#fff" stroke="#567"/><path d="M8.500 3q2 3 0 6M10 1q3 5 0 10" fill="none" stroke="#fff"/></svg>
    <div class="clock"><time>5:02</time><time>26.11.2016</time></div>
    <button class="desktop" aria-label="Show desktop"></button>
  </div>
</footer>
</body>
</html>
```
FILE: styles.css
```css
* { box-sizing: border-box; }
body { margin: 0; height: 100vh; display: flex; flex-direction: column; overflow: hidden; background: #e0e3ec; color: #222; font: 8px/10px "Liberation Sans", Arial, sans-serif; }
button, input { font: inherit; color: inherit; margin: 0; padding: 0; border: 0; background: none; }
button { display: flex; align-items: center; justify-content: center; white-space: nowrap; flex: none; }
svg { display: block; flex: none; }
h1, p { margin: 0; font: inherit; white-space: nowrap; }
.up, .down, .left, .right { display: block; border: 2px solid transparent; }
.up { border-bottom: 3px solid #333; border-top: 0; }
.down { border-top: 3px solid #333; border-bottom: 0; }
.left { border-right: 3px solid #333; border-left: 0; }
.right { border-left: 3px solid #333; border-right: 0; }

.titlebar, .menubar, .view-title, .view-tabs, .osnap, .tray { font-family: "Open Sans", "Noto Sans", sans-serif; }

.titlebar { flex: none; height: 15px; display: flex; align-items: center; gap: 5px; padding-left: 2px; border-top: 1px solid #5f6f86; background: linear-gradient(#93b0d0, #b7cde8); }
.app-icon { width: 11px; height: 11px; }
.window-buttons { margin-left: auto; display: flex; align-self: flex-start; gap: 2px; padding-right: 2px; }
.window-buttons button { width: 21px; height: 13px; border: 1px solid #6c829e; border-top: 0; border-radius: 0 0 3px 3px; background: linear-gradient(#d0deee, #9bb4d2 50%, #b7cde6); }
.window-buttons svg { width: 20px; height: 11px; }
.window-buttons .close { background: linear-gradient(#e39b8d, #c44534 50%, #d87461); border-color: #7a3838; }

.menubar { flex: none; height: 15px; display: flex; align-items: center; gap: 10px; padding-left: 5px; background: linear-gradient(#fafbff, #e4e8f6 50%, #dbe0f1); }

.command { flex: none; margin: 1px 1px 4px 4px; border-top: 1px solid #b4bac8; }
.history, .prompt { display: flex; background: #fff; padding-left: 1px; }
.history { height: 21px; padding-top: 1px; border-bottom: 1px solid #9aa0b0; }
.prompt { height: 13px; align-items: center; font-weight: bold; color: #111; }
.prompt input { flex: 1; min-width: 0; height: 10px; outline: 0; }
.steppers { margin-left: auto; width: 10px; align-self: stretch; display: flex; flex-direction: column; background: #eee; }
.steppers button { flex: 1; }
.boxed button { border: 1px solid #a9b2ca; background: #e5eaf8; }

.tool-tabs { flex: none; height: 12px; display: flex; padding-left: 8px; border-bottom: 1px solid #aab2c8; }
.tool-tabs button { position: relative; padding: 0 8px 0 3px; border-top: 1px solid #aab2c8; background: #d7dcec; }
.tool-tabs button::before { content: ""; position: absolute; left: -4px; top: 0; width: 5px; height: 10px; background: #d7dcec; border-left: 1px solid #9ba3b8; transform: skewX(-30deg); }
.tool-tabs .active, .tool-tabs .active::before { background: #fff; }
.tool-tabs .gear { margin-left: auto; width: 12px; padding: 0; border: 0; background: none; }
.tool-tabs .gear::before { display: none; }
.gear svg { width: 11px; height: 11px; }

.toolbar { flex: none; height: 27px; display: flex; align-items: center; padding: 0 0 8px 4px; background: linear-gradient(#fbfcfe, #e0e3ec); border-left: 1px solid #c6cbd8; }
.toolbar button, .toolbox button { position: relative; width: 20px; }
.toolbar svg, .toolbox svg { width: 16px; height: 16px; }
.toolbar hr { flex: none; width: 2px; height: 16px; margin: 0; border: 0; border-left: 1px solid #bcc1cd; }
.more::after { content: ""; position: absolute; right: 1px; bottom: 0; border: 2px solid transparent; border-right-color: #666; border-bottom-color: #666; }

.workspace { flex: 1; min-height: 0; display: flex; }
.toolbox { flex: none; width: 52px; margin-top: 1px; padding: 4px 12px 1px 0; display: grid; grid-template-columns: 20px 20px; grid-auto-rows: 1fr; border-top: 2px solid #cacedb; }
.canvas-column { flex: 1; min-width: 0; display: flex; flex-direction: column; }
.viewport { flex: 1; min-height: 0; position: relative; background: #9da3ab; border-top: 1px solid #858f9e; }
.scene { width: 100%; height: 100%; }
.view-title { position: absolute; left: 0; top: 0; height: 12px; display: flex; padding-left: 5px; gap: 5px; align-items: center; background: #84a5cb; color: #111; }
.view-title button { width: 8px; height: 10px; border-left: 1px solid #456; }
.view-title button::after { content: ""; border: 2px solid transparent; border-top: 3px solid #111; border-bottom: 0; }
.grid-minor { fill: none; stroke: #848b96; stroke-width: 10; stroke-dasharray: .02 .08; opacity: .25; }
.grid-major { fill: none; stroke: #868c95; stroke-width: 1; vector-effect: non-scaling-stroke; }
.axes { fill: none; stroke: #555a62; stroke-width: 1; }
.axes text { fill: #454b53; stroke: none; font: 10px "Open Sans", sans-serif; }

.view-tabs { flex: none; height: 15px; padding-left: 2px; display: flex; }
.view-tabs button { position: relative; padding: 0 6px 0 5px; height: 14px; background: #d0d6e8; border-bottom: 1px solid #b1b8ca; }
.view-tabs button::after { content: ""; position: absolute; z-index: 1; right: -3px; top: 0; width: 5px; height: 13px; background: inherit; border-right: 1px solid #aab1c4; transform: skewX(-20deg); }
.view-tabs .active { background: #fff; }
.view-tabs .add::after { transform: none; right: 0; }
.view-tabs .add { padding-left: 8px; }
.view-tabs svg { width: 8px; height: 8px; }

.panel { flex: none; width: 140px; padding: 3px 1px 3px 4px; display: flex; flex-direction: column; }
.panel-tabs { flex: none; height: 18px; display: flex; align-items: flex-end; gap: 2px; border-top: 1px solid #c2c7d4; padding-left: 1px; }
.panel-tabs button { width: 28px; height: 15px; gap: 2px; border: 1px solid #aab2c8; border-bottom: 0; border-radius: 3px 6px 0 0; background: #d3d9e9; }
.panel-tabs svg { width: 11px; height: 11px; }
.panel-tabs .active { background: #fff; }
.panel-tabs .gear { margin-left: auto; width: 12px; border: 0; background: none; }
.panel-tools { flex: none; height: 15px; display: flex; justify-content: space-between; align-items: center; padding: 0 2px; background: #eef0f5; }
.panel-tools svg { width: 12px; height: 12px; }
.layers { flex: 1; min-height: 0; display: flex; flex-direction: column; overflow: hidden; background: #fff; border: 1px solid #b4bac8; }
table { width: 100%; table-layout: fixed; border-collapse: collapse; }
th, td { height: 12px; padding: 0; white-space: nowrap; text-align: left; }
th { height: 16px; font-weight: normal; background: linear-gradient(#fff, #f0f1f5); }
th:first-child { padding-left: 4px; }
td:first-child { padding-left: 6px; }
td svg { width: 9px; height: 11px; }
.c-name { width: 56px; }
.c-icon { width: 12px; }
.selected { background: #3399f2; color: #fff; }
.current { font-weight: bold; }
.swatch { display: block; width: 9px; height: 9px; border: 1px solid #444; }
.black { background: #000; border-color: #fff; }
.pink { background: #f0f; }
.blue { background: #00f; }
.red { background: #c80000; }
.green { background: #007800; }
.material { display: block; width: 9px; height: 9px; margin-left: 2px; border: 1px solid #f0f0f2; border-radius: 50%; }
.white { background: #fff; }
.hscroll { margin-top: auto; height: 11px; display: flex; background: #eceef1; }
.hscroll button { width: 12px; }
.hscroll button:last-child { margin-left: auto; }
.thumb { width: 37%; border: 1px solid #a4a8b0; border-radius: 2px; background: linear-gradient(#fafafa, #cfd2d8); display: flex; justify-content: center; align-items: center; }
.thumb::after { content: ""; width: 6px; height: 4px; background: repeating-linear-gradient(90deg, #777 0 1px, transparent 1px 2px); }

.osnap { flex: none; height: 27px; display: flex; align-items: center; gap: 4px; margin-left: 3px; padding: 0 0 4px 4px; border-left: 1px solid #c2c7d4; }
.osnap label { display: flex; align-items: center; gap: 3px; }
.osnap input { appearance: none; width: 9px; height: 9px; border: 1px solid #9a9fa9; background: #f2f3f5; display: flex; align-items: center; justify-content: center; }
.osnap input:checked::after { content: ""; width: 3px; height: 5px; border: solid #273a80; border-width: 0 1px 1px 0; transform: rotate(40deg); }
.osnap .large input { width: 10px; height: 10px; border-radius: 2px; }

.status { flex: none; height: 15px; display: flex; border-top: 1px solid #b4b9c5; border-bottom: 1px solid #70809a; }
.status > * { display: flex; align-items: center; justify-content: center; padding: 0 7px; border-right: 1px solid #bcc1cc; white-space: nowrap; }
.status .cplane { width: 40px; }
.status .coord { width: 62px; }
.status .layer { flex: 1; justify-content: flex-start; padding: 0 0 0 2px; gap: 2px; }
.status .on { background: #e2f3fb; font-weight: bold; color: #111; }
.status .record { padding: 0 9px; }
.status .save { width: 174px; justify-content: flex-start; padding-left: 2px; }

.taskbar { flex: none; height: 28px; display: flex; align-items: center; gap: 2px; padding: 0 2px 0 4px; background: linear-gradient(90deg, #90acca, #a6c1df 35%, #a6c1df 80%, #7f93ac 85%, #76889f); }
.taskbar > button { width: 41px; height: 26px; }
.taskbar > button svg { width: 22px; height: 22px; }
.taskbar .start { width: 28px; margin-right: 8px; }
.taskbar .start svg { width: 26px; height: 26px; }
.taskbar .running { border: 1px solid #7690b2; border-radius: 2px; background: linear-gradient(135deg, #cfddec, #a9c0dc); }
.taskbar .focused { background: #dfe8f2; }
.tray { margin-left: auto; height: 100%; display: flex; align-items: center; gap: 6px; color: #fff; }
.tray svg { width: 12px; height: 12px; }
.lang { margin-right: 4px; }
.up.light { border-bottom-color: #fff; }
.clock { display: flex; flex-direction: column; align-items: center; line-height: 12px; margin: 0 2px 0 6px; }
.desktop { width: 9px; height: 26px; border: 1px solid #5e6f88; background: linear-gradient(135deg, #a3b3c8, #5a6b85); }
```
